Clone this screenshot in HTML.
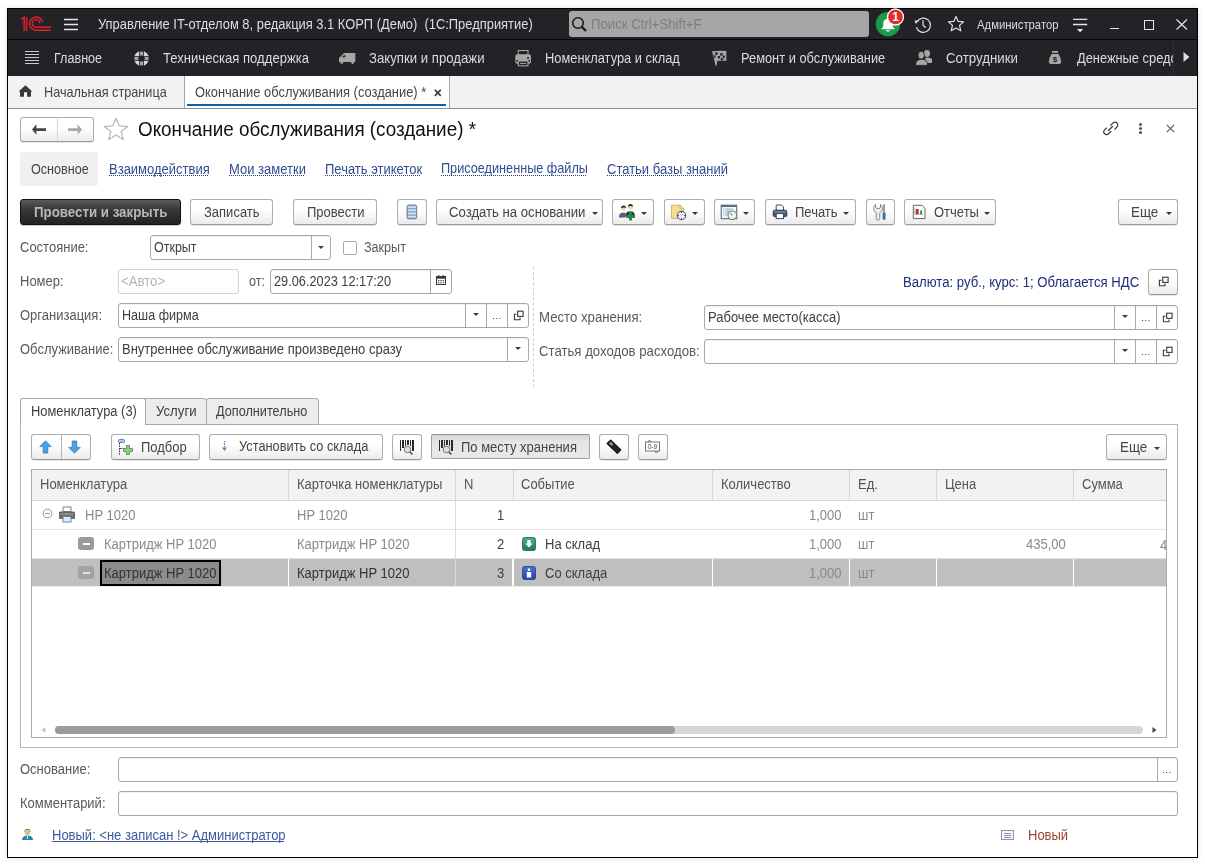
<!DOCTYPE html>
<html><head><meta charset="utf-8">
<style>
*{box-sizing:border-box}
html,body{margin:0;padding:0}
body{width:1205px;height:865px;background:#fff;position:relative;overflow:hidden;font-family:"Liberation Sans",sans-serif;font-size:13px;color:#333}
.a{position:absolute}
.t{position:absolute;white-space:nowrap;line-height:1;transform:scaleY(1.1);transform-origin:0 0.1em;will-change:transform}
#win{position:absolute;left:7px;top:8px;width:1191px;height:850px;border:1px solid #000;box-shadow:0 0 6px rgba(0,0,0,.12)}
#title{position:absolute;left:8px;top:9px;width:1189px;height:30px;background:#232327}
#tsep{position:absolute;left:8px;top:39px;width:1189px;height:1px;background:#050507}
#menu{position:absolute;left:8px;top:40px;width:1189px;height:36px;background:#222227}
#tabs{position:absolute;left:8px;top:76px;width:1189px;height:33px;background:#f2f2f2;border-bottom:1px solid #8e8e8e}
.mt{color:#dcdcdc;font-size:12.85px}
.btn{position:absolute;height:26px;border:1px solid #aeaeae;border-bottom-color:#9a9a9a;border-radius:3px;background:linear-gradient(#fff,#fff 40%,#ebebeb);box-shadow:0 1px 0 rgba(0,0,0,.10)}
.inp{position:absolute;height:25px;border:1px solid #a8a8a8;border-radius:3px;background:#fff;box-shadow:inset 0 1px 1px rgba(0,0,0,.06)}
.lbl{color:#5a5a5a;font-size:13px}
.lnk{font-size:13px;color:#324c93}
.dot{position:absolute;height:1px;background:repeating-linear-gradient(90deg,#2c3a78 0 1px,transparent 1px 2px)}
.dd{position:absolute;top:0;bottom:0;border-left:1px solid #a8a8a8}
.tri{position:absolute;width:0;height:0;border-left:3px solid transparent;border-right:3px solid transparent;border-top:3.5px solid #3a3a3a}
</style></head><body>
<div id="win"></div>
<div id="title"></div>
<div id="tsep"></div>
<div id="menu"></div>
<div id="tabs"></div>

<!-- TITLE BAR -->
<svg class="a" style="left:20px;top:16px" width="32" height="16" viewBox="0 0 32 16">
 <g fill="none" stroke="#e3202a" stroke-width="1.5">
  <path d="M1.2 3.6 L4.2 1.2 V15"/>
  <path d="M6.6 1.2 V15"/>
  <path d="M22.6 6.2 A6.6 6.6 0 1 0 16.2 14.3 H30.8"/>
  <path d="M19.9 7.2 A3.8 3.8 0 1 0 16.2 11.2 H30.8"/>
 </g>
</svg>
<svg class="a" style="left:63px;top:18px" width="16" height="13" viewBox="0 0 16 13">
 <g stroke="#e6e6e6" stroke-width="1.5"><path d="M1 1.5H15M1 6.5H15M1 11.5H15"/></g>
</svg>
<div class="t mt" style="left:98px;top:18px;color:#dedede;font-size:12.92px">Управление IT-отделом 8, редакция 3.1 КОРП (Демо)&nbsp; (1С:Предприятие)</div>
<div class="a" style="left:569px;top:11px;width:300px;height:26px;background:#a6a6a6;border-radius:3px"></div>
<svg class="a" style="left:571px;top:16px" width="17" height="17" viewBox="0 0 17 17">
 <circle cx="7" cy="7" r="5.3" fill="none" stroke="#1e1e1e" stroke-width="1.6"/>
 <path d="M10.8 10.8 L15 15" stroke="#1e1e1e" stroke-width="2.4"/>
</svg>
<div class="t" style="left:591px;top:17px;color:#7e7e7e;font-size:13.2px">Поиск Ctrl+Shift+F</div>
<svg class="a" style="left:874px;top:8px" width="32" height="30" viewBox="0 0 32 30">
 <circle cx="14" cy="16" r="12.3" fill="#1c9a45"/>
 <path d="M7.3 21.2 H20.8 L18.8 18.2 V14.8 A4.8 4.8 0 0 0 9.3 14.8 V18.2 Z" fill="#fff"/>
 <path d="M11.5 22.3 H16.5 Q14 25 11.5 22.3 Z" fill="#fff"/>
 <circle cx="21.5" cy="9" r="8" fill="#e42a2a" stroke="#fff" stroke-width="1.3"/>
 <text x="21.5" y="13.3" text-anchor="middle" font-family="Liberation Sans" font-weight="bold" font-size="12" fill="#fff">1</text>
</svg>
<svg class="a" style="left:913px;top:15px" width="19" height="19" viewBox="0 0 19 19">
 <path d="M4.2 6.6 A7.1 7.1 0 1 1 3.5 12.2" fill="none" stroke="#dcdcdc" stroke-width="1.25"/>
 <path d="M1.4 5.4 L6 5.4 L2.8 9 Z" fill="#dcdcdc"/>
 <path d="M10 5.2 V10 L12.7 12.7" fill="none" stroke="#dcdcdc" stroke-width="1.25"/>
</svg>
<svg class="a" style="left:947px;top:15px" width="18" height="18" viewBox="0 0 18 18">
 <path d="M9 1.5 L11.2 6.4 L16.6 6.9 L12.5 10.4 L13.8 15.8 L9 13 L4.2 15.8 L5.5 10.4 L1.4 6.9 L6.8 6.4 Z" fill="none" stroke="#e0e0e0" stroke-width="1.2" stroke-linejoin="round"/>
</svg>
<div class="t" style="left:977px;top:18.6px;color:#dcdcdc;font-size:11.3px">Администратор</div>
<svg class="a" style="left:1071px;top:17px" width="17" height="16" viewBox="0 0 17 16">
 <g stroke="#e6e6e6" stroke-width="1.3"><path d="M2 2.4H16.2M2 7.5H16.2"/></g>
 <path d="M5.9 12 H12.3 L9.1 15.2 Z" fill="#e6e6e6"/>
</svg>
<div class="a" style="left:1110px;top:28px;width:9px;height:1.3px;background:#e6e6e6"></div>
<div class="a" style="left:1144px;top:20px;width:10px;height:10px;border:1.2px solid #e6e6e6"></div>
<svg class="a" style="left:1176px;top:19px" width="12" height="11" viewBox="0 0 12 11">
 <path d="M0.5 0.5 L11 10.5 M11 0.5 L0.5 10.5" stroke="#e6e6e6" stroke-width="1.2"/>
</svg>

<!-- MENU BAR -->
<svg class="a" style="left:25px;top:51px" width="15" height="14" viewBox="0 0 15 14">
 <g stroke="#c8c8c8" stroke-width="1"><path d="M0 0.5H14M0 3.5H14M0 6.5H14M0 9.5H14M0 12.5H14"/></g>
</svg>
<div class="t mt" style="left:54px;top:52px;font-size:12.6px">Главное</div>
<svg class="a" style="left:134px;top:51px" width="16" height="16" viewBox="0 0 16 16">
 <circle cx="7.5" cy="7.5" r="7.5" fill="#d6d6d6"/>
 <rect x="5.2" y="0" width="4.6" height="16" fill="#222225"/>
 <rect x="0" y="5.2" width="16" height="4.6" fill="#222225"/>
 <rect x="6" y="0.6" width="3" height="4" fill="#a2a2a2"/>
 <rect x="6" y="10.4" width="3" height="4" fill="#a2a2a2"/>
 <rect x="0.4" y="6" width="4" height="3" fill="#a2a2a2"/>
 <rect x="10.6" y="6" width="4" height="3" fill="#a2a2a2"/>
</svg>
<div class="t mt" style="left:163px;top:51px;font-size:13.1px">Техническая поддержка</div>
<svg class="a" style="left:339px;top:52px" width="17" height="13" viewBox="0 0 17 13">
 <path d="M0 6 L5 1 H16.3 V10 H0 Z" fill="#a6a6a6"/>
 <path d="M2.8 5.2 L4.8 3.2 H6.3 V5.2 Z" fill="#222225"/>
 <circle cx="2.8" cy="10.6" r="1.4" fill="#a6a6a6"/><circle cx="13.6" cy="10.6" r="1.4" fill="#a6a6a6"/>
</svg>
<div class="t mt" style="left:369px;top:51px;font-size:13.2px">Закупки и продажи</div>
<svg class="a" style="left:515px;top:50px" width="17" height="17" viewBox="0 0 17 17">
 <rect x="3.3" y="0.5" width="9.7" height="5" fill="#222225" stroke="#a6a6a6" stroke-width="1.1"/>
 <rect x="0.3" y="4.3" width="15.7" height="9.5" rx="2" fill="#a6a6a6"/>
 <circle cx="13" cy="8" r="1" fill="#222225"/>
 <rect x="1.4" y="10" width="1.6" height="2" fill="#222225"/><rect x="13.3" y="10" width="1.6" height="2" fill="#222225"/>
 <rect x="3.3" y="11" width="9.7" height="4.8" fill="#222225" stroke="#a6a6a6" stroke-width="1.1"/>
 <path d="M5 13.4 H11.3" stroke="#a6a6a6" stroke-width="1"/>
</svg>
<div class="t mt" style="left:545px;top:52px">Номенклатура и склад</div>
<svg class="a" style="left:711px;top:50px" width="17" height="17" viewBox="0 0 17 17">
 <path d="M1 1.2 Q8 0.6 15.4 1 V10.7 H6.4 L5.6 16 L4.6 15.6 Z" fill="#a6a6a6"/>
 <g fill="#222225"><rect x="4.2" y="2.4" width="2.4" height="2.4"/><rect x="9.2" y="3.2" width="2.4" height="2.4"/><rect x="2.6" y="5.2" width="1.8" height="2.6"/><rect x="6.8" y="6" width="2.4" height="2.4"/><rect x="11.8" y="5.6" width="2" height="2.4"/><rect x="9.8" y="8.2" width="2.4" height="2.2"/><rect x="5.6" y="2.2" width="0" height="0"/></g>
</svg>
<div class="t mt" style="left:741px;top:52px">Ремонт и обслуживание</div>
<svg class="a" style="left:914px;top:50px" width="19" height="16" viewBox="0 0 19 16">
 <ellipse cx="13" cy="3.5" rx="3" ry="3.4" fill="#a6a6a6"/>
 <path d="M11 8 Q15 6.6 18 9 V13 H12 Z" fill="#a6a6a6"/>
 <ellipse cx="7.2" cy="5.2" rx="3.2" ry="3.9" fill="#a6a6a6" stroke="#222225" stroke-width=".9"/>
 <path d="M1.6 15.4 Q1.6 9.2 7.6 9.2 Q13.6 9.2 13.6 15.4 Z" fill="#a6a6a6" stroke="#222225" stroke-width=".9"/>
</svg>
<div class="t mt" style="left:946px;top:51.3px;font-size:13.3px">Сотрудники</div>
<svg class="a" style="left:1048px;top:50px" width="14" height="16" viewBox="0 0 14 16">
 <rect x="4" y="1" width="6.1" height="1.9" fill="#a6a6a6"/>
 <path d="M3.5 4 H10.5 Q13.2 8 13.2 12 Q13.2 14 11 14 H3 Q0.8 14 0.8 12 Q0.8 8 3.5 4 Z" fill="#a6a6a6"/>
 <text x="7" y="12.3" text-anchor="middle" font-family="Liberation Sans" font-size="8" font-weight="bold" fill="#222225">$</text>
</svg>
<div class="a" style="left:1077px;top:40px;width:96px;height:36px;overflow:hidden"><div class="t mt" style="left:0;top:12px">Денежные средства</div></div>
<div class="a" style="left:1173px;top:40px;width:1px;height:36px;background:#2e2e32"></div>
<svg class="a" style="left:1182px;top:51px" width="9" height="12" viewBox="0 0 9 12"><path d="M1.5 1 L7.5 6 L1.5 11Z" fill="#e0e0e0"/></svg>

<!-- TAB BAR -->
<svg class="a" style="left:18px;top:85px" width="15" height="13" viewBox="0 0 15 13">
 <path d="M7.5 0.3 L14.2 6.6 H13 V11.8 H9.1 V7.2 H6 V11.8 H2 V6.6 H0.5 Z" fill="#3a3a3a"/>
</svg>
<div class="t" style="left:44px;top:86px;color:#454545;font-size:12.7px">Начальная страница</div>
<div class="a" style="left:184px;top:76px;width:266px;height:32px;background:#fff;border-left:1px solid #a6a6a6;border-right:1px solid #a6a6a6"></div>
<div class="a" style="left:187px;top:104px;width:259px;height:2px;background:#0c60a6"></div>
<div class="t" style="left:195px;top:86px;color:#454545;font-size:12.9px">Окончание обслуживания (создание) *</div>
<svg class="a" style="left:433px;top:88px" width="10" height="10" viewBox="0 0 10 10"><path d="M1.8 1.8 L7.8 7.8 M7.8 1.8 L1.8 7.8" stroke="#404040" stroke-width="1.8"/></svg>


<!-- FORM HEADER -->
<div class="btn" style="left:20px;top:117px;width:74px;height:25px;border-radius:3px"></div>
<div class="a" style="left:57px;top:118px;width:1px;height:23px;background:#d6d6d6"></div>
<svg class="a" style="left:31px;top:123px" width="16" height="13" viewBox="0 0 16 13"><path d="M1 6.5 L5.4 1.2 V5.2 H15 V7.9 H5.4 V11.8 Z" fill="#454545"/></svg>
<svg class="a" style="left:67px;top:123px" width="16" height="13" viewBox="0 0 16 13"><path d="M15 6.5 L10.6 1.2 V5.2 H1 V7.9 H10.6 V11.8 Z" fill="#a9a9a9"/></svg>
<svg class="a" style="left:103px;top:117px" width="26" height="24" viewBox="0 0 26 24">
 <path d="M13 1.3 L16.1 8.8 L24.6 9.5 L18.1 14.6 L20.3 22.6 L13 18 L5.7 22.6 L7.9 14.6 L1.4 9.5 L9.9 8.8 Z" fill="none" stroke="#b0b0b0" stroke-width="1.1" stroke-linejoin="round"/>
</svg>
<div class="t" style="left:138px;top:119.5px;font-size:18.85px;color:#111">Окончание обслуживания (создание) *</div>
<svg class="a" style="left:1102px;top:120px" width="17" height="17" viewBox="0 0 17 17">
 <g fill="none" stroke="#3a3a3a" stroke-width="1.15" stroke-linecap="round">
  <path d="M4.4 8 L2.62 9.82 A2.8 2.8 0 0 0 6.58 13.78 L8.9 11.5"/>
  <path d="M8.6 5.3 L11.02 3.02 A2.8 2.8 0 0 1 14.98 6.98 L12.7 9.3"/>
  <path d="M6.5 10.5 L10.5 6.5"/>
 </g>
</svg>
<div class="a" style="left:1139px;top:123px;width:3px;height:3px;border-radius:50%;background:#555;box-shadow:0 4px 0 #555,0 8px 0 #555"></div>
<svg class="a" style="left:1166px;top:124px" width="9" height="9" viewBox="0 0 9 9"><path d="M0.8 0.8 L8.2 8.2 M8.2 0.8 L0.8 8.2" stroke="#555" stroke-width="1.1"/></svg>

<div class="a" style="left:20px;top:152px;width:78px;height:34px;background:#f0f0f0;border-radius:3px"></div>
<div class="t" style="left:30.5px;top:163px;color:#454545;font-size:12.6px">Основное</div>
<div class="t lnk" style="left:109px;top:161.7px">Взаимодействия</div>
<div class="t lnk" style="left:229px;top:161.7px">Мои заметки</div>
<div class="t lnk" style="left:325px;top:161.7px">Печать этикеток</div>
<div class="t lnk" style="left:441px;top:161.7px;font-size:12.7px">Присоединенные файлы</div>
<div class="t lnk" style="left:607px;top:161.7px">Статьи базы знаний</div>

<div class="dot" style="left:109px;top:175px;width:100px"></div>
<div class="dot" style="left:229px;top:175px;width:76px"></div>
<div class="dot" style="left:325px;top:175px;width:96px"></div>
<div class="dot" style="left:441px;top:175px;width:146px"></div>
<div class="dot" style="left:607px;top:175px;width:118px"></div>
<!-- TOOLBAR -->
<div class="a" style="left:20px;top:199px;width:161px;height:26px;border-radius:3px;border:1px solid #111;background:linear-gradient(#5a5a5e,#353538 45%,#232325);box-shadow:0 1px 1px rgba(0,0,0,.2)"></div>
<div class="t" style="left:34px;top:205px;font-weight:bold;color:#b8b8b8;font-size:13.3px">Провести и закрыть</div>
<div class="btn" style="left:190px;top:199px;width:83px"></div>
<div class="t" style="left:204px;top:205px;color:#454545">Записать</div>
<div class="btn" style="left:293px;top:199px;width:84px"></div>
<div class="t" style="left:307px;top:205px;color:#454545">Провести</div>
<div class="btn" style="left:397px;top:199px;width:30px"></div>
<svg class="a" style="left:406px;top:204px" width="12" height="16" viewBox="0 0 12 16">
 <rect x="1" y="1" width="9.7" height="13.9" rx="1.6" fill="#8aa3bf" stroke="#64798f" stroke-width=".9"/>
 <g fill="#d2e6f8"><rect x="1.8" y="2.2" width="8.1" height="1.7"/><rect x="1.8" y="5.4" width="8.1" height="1.7"/><rect x="1.8" y="8.6" width="8.1" height="1.7"/><rect x="1.8" y="11.8" width="8.1" height="1.7"/></g>
</svg>
<div class="btn" style="left:436px;top:199px;width:167px"></div>
<div class="t" style="left:449px;top:205px;color:#454545;font-size:13.15px">Создать на основании</div>
<div class="tri" style="left:592px;top:212px"></div>
<div class="btn" style="left:612px;top:199px;width:42px"></div>
<svg class="a" style="left:618px;top:203px" width="19" height="18" viewBox="0 0 19 18">
 <path d="M1 14.5 Q1 9.7 4.5 9.7 H7.5 V14.5 Z" fill="#555b70"/>
 <circle cx="5.5" cy="5.3" r="2.4" fill="#eadba4"/>
 <path d="M3 5 Q3 2.5 5.5 2.5 Q8 2.5 8 5 Q6.5 3.8 3 5Z" fill="#3a2a18"/>
 <path d="M7.3 13.5 Q7.3 8.2 12.3 8.2 Q17 8.2 17 13.5 Z" fill="#2b3552"/>
 <circle cx="12.5" cy="3.9" r="2.5" fill="#d8e0b0"/>
 <path d="M10 3.6 Q10 1 12.5 1 Q15 1 15 3.6 Q13.5 2.4 10 3.6Z" fill="#3a2a18"/>
 <path d="M11 9 H14 V12 H17 V15 H14 V17.5 H11 V15 H8.3 V12 H11 Z" fill="#1e8c3c"/>
</svg>
<div class="tri" style="left:641px;top:212px"></div>
<div class="btn" style="left:664px;top:199px;width:41px"></div>
<svg class="a" style="left:670px;top:204px" width="18" height="18" viewBox="0 0 18 18">
 <path d="M1.4 1.2 H10 L13.7 4.8 V14.5 H1.4 Z" fill="#f3de95" stroke="#d4b25a" stroke-width=".9"/>
 <path d="M10 1.2 V4.8 H13.7 Z" fill="#f8e8b0" stroke="#c9a548" stroke-width=".7"/>
 <circle cx="11.5" cy="11.5" r="4.2" fill="#eef2fb" stroke="#50586a" stroke-width="1.1"/>
 <g stroke="#2a2f3a" stroke-width="1"><path d="M11.5 7.6V8.8M11.5 14.2V15.4M7.6 11.5H8.8M14.2 11.5H15.4"/></g>
 <path d="M11.5 11.5 L12.8 9.8" stroke="#6a7aa0" stroke-width=".8"/>
</svg>
<div class="tri" style="left:692px;top:212px"></div>
<div class="btn" style="left:714px;top:199px;width:41px"></div>
<svg class="a" style="left:720px;top:204px" width="18" height="18" viewBox="0 0 18 18">
 <rect x="1.2" y="1.2" width="15.5" height="13.5" fill="#f6fafd" stroke="#5b6b7b" stroke-width="1.1"/>
 <rect x="1.2" y="1.2" width="15.5" height="1.8" fill="#5b6b7b"/>
 <g fill="#6d8fc4"><rect x="3.3" y="4.6" width="1" height="1"/><rect x="3.3" y="6.6" width="1" height="1"/><rect x="3.3" y="8.6" width="1" height="1"/><rect x="3.3" y="10.6" width="1" height="1"/>
 <rect x="5.3" y="4.7" width="7.5" height=".8"/><rect x="5.3" y="6.7" width="4.5" height=".8"/><rect x="5.3" y="8.7" width="3" height=".8"/><rect x="5.3" y="10.7" width="2" height=".8"/></g>
 <circle cx="12.3" cy="11.3" r="4.3" fill="#eef7ee" stroke="#6a8a6a" stroke-width="1.1"/>
 <path d="M10.6 9.4 L12.3 11.3" stroke="#2a3a2a" stroke-width="1"/>
</svg>
<div class="tri" style="left:743px;top:212px"></div>
<div class="btn" style="left:765px;top:199px;width:91px"></div>
<svg class="a" style="left:772px;top:204px" width="16" height="16" viewBox="0 0 16 16">
 <path d="M4.2 1 H9.5 L11.5 3 V6.5 H4.2 Z" fill="#fff" stroke="#3a4a5a" stroke-width="1"/>
 <rect x="1.2" y="6.2" width="13.6" height="6.4" rx="1.5" fill="#3e5a7a" stroke="#2a3e55" stroke-width="1"/>
 <rect x="2.4" y="7.2" width="11.2" height="1.3" fill="#7d95b0"/>
 <rect x="4.2" y="9.6" width="7.3" height="5" fill="#fff" stroke="#3a4a5a" stroke-width="1"/>
</svg>
<div class="t" style="left:795px;top:205px;color:#454545">Печать</div>
<div class="tri" style="left:843px;top:212px"></div>
<div class="btn" style="left:866px;top:199px;width:29px"></div>
<svg class="a" style="left:872px;top:203px" width="17" height="18" viewBox="0 0 17 18">
 <path d="M3.6 1.5 A4.9 4.9 0 0 0 4.3 9.8 V15.4 A1.75 1.75 0 0 0 7.8 15.4 V9.8 A4.9 4.9 0 0 0 8.5 1.5 V4 Q8.5 5.6 6.05 5.6 Q3.6 5.6 3.6 4 Z" fill="#eeeeee" stroke="#7a7a7a" stroke-width=".9"/>
 <rect x="11.4" y="1.2" width="1.3" height="8.6" fill="#6a6a6a"/>
 <rect x="10.6" y="9.4" width="2.9" height="7.4" rx=".9" fill="#3d6e9e"/>
</svg>
<div class="btn" style="left:904px;top:199px;width:92px"></div>
<svg class="a" style="left:912px;top:204px" width="14" height="16" viewBox="0 0 14 16">
 <path d="M1.3 1.3 H10 L13 4.3 V14.6 H1.3 Z" fill="#fff" stroke="#666" stroke-width="1"/>
 <path d="M2.8 3.5 V10.3 H11" fill="none" stroke="#aaa" stroke-width=".8"/>
 <rect x="3.7" y="5" width="3" height="5.3" fill="#c8303a"/>
 <rect x="8.2" y="6.4" width="1.8" height="3.9" fill="#2a8a3a"/>
</svg>
<div class="t" style="left:934px;top:205px;color:#454545">Отчеты</div>
<div class="tri" style="left:983.5px;top:212px"></div>
<div class="btn" style="left:1118px;top:199px;width:60px"></div>
<div class="t" style="left:1131px;top:204.6px;color:#454545;font-size:13.4px">Еще</div>
<div class="tri" style="left:1165.5px;top:212px"></div>

<!-- FIELDS -->
<div class="t lbl" style="left:20px;top:240px">Состояние:</div>
<div class="inp" style="left:150px;top:235px;width:181px"><div class="dd" style="left:160px"></div></div>
<div class="t" style="left:154px;top:240.9px;color:#414141;font-size:12.5px">Открыт</div>
<div class="tri" style="left:318px;top:246px"></div>
<div class="a" style="left:343px;top:241px;width:14px;height:14px;border:1px solid #a8a8a8;border-radius:2px;background:#fff"></div>
<div class="t lbl" style="left:364px;top:240.5px;font-size:12.6px">Закрыт</div>

<div class="t lbl" style="left:20px;top:274px">Номер:</div>
<div class="inp" style="left:118px;top:269px;width:121px;border-color:#d3d3d3;box-shadow:none"></div>
<div class="t" style="left:121px;top:273.5px;color:#b5b5b5;font-size:13.2px">&lt;Авто&gt;</div>
<div class="t lbl" style="left:249px;top:274.5px;font-size:12.6px">от:</div>
<div class="inp" style="left:270px;top:269px;width:182px"><div class="dd" style="left:159px"></div></div>
<div class="t" style="left:274px;top:274.5px;color:#414141;font-size:12.75px">29.06.2023 12:17:20</div>
<svg class="a" style="left:436px;top:275px" width="10" height="10" viewBox="0 0 10 10">
 <rect x="0.5" y="1.5" width="9" height="8" fill="#fff" stroke="#3a3a3a"/>
 <rect x="0.5" y="1.5" width="9" height="2.2" fill="#3a3a3a"/>
 <g fill="#3a3a3a"><rect x="2" y="5" width="1.3" height="1.1"/><rect x="4.35" y="5" width="1.3" height="1.1"/><rect x="6.7" y="5" width="1.3" height="1.1"/><rect x="2" y="7.2" width="1.3" height="1.1"/><rect x="4.35" y="7.2" width="1.3" height="1.1"/><rect x="6.7" y="7.2" width="1.3" height="1.1"/></g>
 <rect x="2.2" y="0" width="1.1" height="1.8" fill="#3a3a3a"/><rect x="6.7" y="0" width="1.1" height="1.8" fill="#3a3a3a"/>
</svg>
<div class="t" style="left:903px;top:274.5px;color:#1f2d7a;font-size:13.15px">Валюта: руб., курс: 1; Облагается НДС</div>
<div class="btn" style="left:1148px;top:269px;width:30px"></div>

<div class="t lbl" style="left:20px;top:308px">Организация:</div>
<div class="inp" style="left:118px;top:303px;width:411px"><div class="dd" style="left:346px"></div><div class="dd" style="left:367px"></div><div class="dd" style="left:388px"></div></div>
<div class="t" style="left:122px;top:309px;color:#414141;font-size:12.6px">Наша фирма</div>
<div class="tri" style="left:473px;top:313px"></div>

<div class="t lbl" style="left:20px;top:342px">Обслуживание:</div>
<div class="inp" style="left:118px;top:337px;width:411px"><div class="dd" style="left:388px"></div></div>
<div class="t" style="left:122px;top:342px;color:#414141">Внутреннее обслуживание произведено сразу</div>
<div class="tri" style="left:515px;top:347px"></div>

<div class="a" style="left:533px;top:267px;width:0;height:120px;border-left:1px dashed #cfcfcf"></div>

<div class="t lbl" style="left:539px;top:310px;font-size:13.2px">Место хранения:</div>
<div class="inp" style="left:704px;top:305px;width:474px"><div class="dd" style="left:409px"></div><div class="dd" style="left:430px"></div><div class="dd" style="left:451px"></div></div>
<div class="t" style="left:708px;top:310px;color:#414141">Рабочее место(касса)</div>
<div class="tri" style="left:1122px;top:315px"></div>

<div class="t lbl" style="left:539px;top:343.5px;font-size:13.2px">Статья доходов расходов:</div>
<div class="inp" style="left:704px;top:339px;width:474px"><div class="dd" style="left:409px"></div><div class="dd" style="left:430px"></div><div class="dd" style="left:451px"></div></div>
<div class="tri" style="left:1122px;top:349px"></div>


<div class="a" style="left:493.2px;top:318px;width:1.3px;height:1.3px;background:#444;box-shadow:3.2px 0 0 #444,6.4px 0 0 #444"></div>
<svg class="a" style="left:512px;top:308.5px" width="13" height="13" viewBox="0 0 13 13"><rect x="5.7" y="2.2" width="5.4" height="5.2" fill="none" stroke="#3a3a3a" stroke-width="1.1"/><path d="M4.6 5.2 H2.4 V10.8 H8 V8.6" fill="none" stroke="#3a3a3a" stroke-width="1.1"/></svg>
<div class="a" style="left:1142.2px;top:320px;width:1.3px;height:1.3px;background:#444;box-shadow:3.2px 0 0 #444,6.4px 0 0 #444"></div>
<svg class="a" style="left:1161px;top:310.5px" width="13" height="13" viewBox="0 0 13 13"><rect x="5.7" y="2.2" width="5.4" height="5.2" fill="none" stroke="#3a3a3a" stroke-width="1.1"/><path d="M4.6 5.2 H2.4 V10.8 H8 V8.6" fill="none" stroke="#3a3a3a" stroke-width="1.1"/></svg>
<div class="a" style="left:1142.2px;top:354px;width:1.3px;height:1.3px;background:#444;box-shadow:3.2px 0 0 #444,6.4px 0 0 #444"></div>
<svg class="a" style="left:1161px;top:344.5px" width="13" height="13" viewBox="0 0 13 13"><rect x="5.7" y="2.2" width="5.4" height="5.2" fill="none" stroke="#3a3a3a" stroke-width="1.1"/><path d="M4.6 5.2 H2.4 V10.8 H8 V8.6" fill="none" stroke="#3a3a3a" stroke-width="1.1"/></svg>
<svg class="a" style="left:1157px;top:274.5px" width="13" height="13" viewBox="0 0 13 13"><rect x="5.7" y="2.2" width="5.4" height="5.2" fill="none" stroke="#3a3a3a" stroke-width="1.1"/><path d="M4.6 5.2 H2.4 V10.8 H8 V8.6" fill="none" stroke="#3a3a3a" stroke-width="1.1"/></svg>
<!-- TABS PANEL -->
<div class="a" style="left:20px;top:424px;width:1158px;height:324px;border:1px solid #b6b6b6"></div>
<div class="a" style="left:145px;top:398px;width:62px;height:27px;background:#ececec;border:1px solid #a8a8a8;border-left:none;border-radius:0 3px 0 0"></div>
<div class="a" style="left:206px;top:398px;width:113px;height:27px;background:#ececec;border:1px solid #a8a8a8;border-radius:3px 3px 0 0"></div>
<div class="a" style="left:20px;top:398px;width:126px;height:27px;background:#fff;border:1px solid #a8a8a8;border-bottom:none;border-radius:3px 3px 0 0"></div>
<div class="t" style="left:30.5px;top:404.5px;color:#414141;font-size:12.9px">Номенклатура (3)</div>
<div class="t" style="left:156px;top:404.3px;color:#414141;font-size:13.2px">Услуги</div>
<div class="t" style="left:216px;top:404.5px;color:#414141;font-size:12.7px">Дополнительно</div>

<!-- TABLE TOOLBAR -->
<div class="btn" style="left:31px;top:434px;width:60px;border-radius:3px"></div>
<div class="a" style="left:61px;top:435px;width:1px;height:24px;background:#b5b5b5"></div>
<svg class="a" style="left:39px;top:440px" width="13" height="14" viewBox="0 0 13 14"><path d="M6.5 0.8 L12.2 6.6 H8.8 V13 H4.2 V6.6 H0.8 Z" fill="#4aa3e0" stroke="#2d7fbf" stroke-width=".8"/></svg>
<svg class="a" style="left:68px;top:440px" width="13" height="14" viewBox="0 0 13 14"><path d="M6.5 13.2 L12.2 7.4 H8.8 V1 H4.2 V7.4 H0.8 Z" fill="#4aa3e0" stroke="#2d7fbf" stroke-width=".8"/></svg>
<div class="btn" style="left:111px;top:434px;width:89px"></div>
<svg class="a" style="left:117px;top:438px" width="19" height="18" viewBox="0 0 19 18">
 <rect x="1.5" y="1.5" width="6" height="3" rx="1" fill="#b9c9ef" stroke="#5a6fb8" stroke-width=".9"/>
 <path d="M2.5 5 V17 M3 10.5 H7" stroke="#333" stroke-width="1" stroke-dasharray="1.5 1"/>
 <path d="M9.5 7.5 H12.5 V10.5 H15.5 V13.5 H12.5 V16.5 H9.5 V13.5 H6.5 V10.5 H9.5 Z" fill="#8fd07c" stroke="#4e9a3c" stroke-width=".9"/>
</svg>
<div class="t" style="left:141px;top:440px;color:#454545">Подбор</div>
<div class="btn" style="left:209px;top:434px;width:174px"></div>
<svg class="a" style="left:221px;top:440px" width="7" height="13" viewBox="0 0 7 13"><path d="M3.5 1 V7" stroke="#4a86c8" stroke-width="1.2" stroke-dasharray="1.5 1"/><path d="M1 7.5 H6 L3.5 11 Z" fill="#4a86c8"/></svg>
<div class="t" style="left:239px;top:440px;color:#454545;font-size:12.8px">Установить со склада</div>
<div class="btn" style="left:392px;top:434px;width:30px"></div>
<svg id="bc1" class="a" style="left:399px;top:439px" width="17" height="18" viewBox="0 0 17 18">
 <g fill="#2a2a2a"><rect x="1" y="1" width="1" height="11"/><rect x="3" y="1" width="2" height="8"/><rect x="6" y="1" width="1" height="6"/><rect x="8" y="1" width="2" height="5"/><rect x="11" y="1" width="1" height="6"/><rect x="13" y="1" width="2" height="11"/></g>
 <circle cx="8.5" cy="10.5" r="3.3" fill="#d9dcef" stroke="#777" stroke-width="1"/>
 <path d="M10.8 12.8 L13.5 15.5" stroke="#666" stroke-width="1.8"/>
</svg>
<div class="a" style="left:431px;top:434px;width:159px;height:25px;border:1px solid #a0a0a0;border-top-color:#8f8f8f;border-radius:2px;background:linear-gradient(#d6d6d6,#e6e6e6 30%,#e8e8e8)"></div>
<svg class="a" style="left:438px;top:439px" width="17" height="18" viewBox="0 0 17 18">
 <g fill="#2a2a2a"><rect x="1" y="1" width="1" height="11"/><rect x="3" y="1" width="2" height="8"/><rect x="6" y="1" width="1" height="6"/><rect x="8" y="1" width="2" height="5"/><rect x="11" y="1" width="1" height="6"/><rect x="13" y="1" width="2" height="11"/></g>
 <circle cx="8.5" cy="10.5" r="3.3" fill="#d9dcef" stroke="#777" stroke-width="1"/>
 <path d="M10.8 12.8 L13.5 15.5" stroke="#666" stroke-width="1.8"/>
</svg>
<div class="t" style="left:461px;top:440px;color:#454545">По месту хранения</div>
<div class="btn" style="left:599px;top:434px;width:30px"></div>
<svg class="a" style="left:606px;top:439px" width="16" height="16" viewBox="0 0 16 16">
 <path d="M1.2 4.6 L4.6 1.2 L14.6 10.8 L11.4 14.2 Z" fill="#2b2620" stroke="#1a1712" stroke-width="1.4" stroke-linejoin="round"/>
 <path d="M3 4.3 L4.6 2.7 L7.4 5.3 L5.8 6.9 Z" fill="#a49c88"/>
</svg>
<div class="btn" style="left:638px;top:434px;width:30px"></div>
<svg class="a" style="left:644px;top:438px" width="18" height="17" viewBox="0 0 18 17">
 <rect x="1.5" y="4" width="14" height="9" fill="#fff" stroke="#666" stroke-width=".9"/>
 <path d="M4 4 L5.5 2 L7 4" fill="none" stroke="#666" stroke-width=".9"/>
 <path d="M11 13 L12.5 15 L14 13" fill="none" stroke="#666" stroke-width=".9"/>
 <text x="8.5" y="11.2" text-anchor="middle" font-family="Liberation Sans" font-size="6.5" fill="#444">0-9</text>
</svg>
<div class="btn" style="left:1106px;top:434px;width:61px"></div>
<div class="t" style="left:1120px;top:439.6px;color:#454545;font-size:13.4px">Еще</div>
<div class="tri" style="left:1154px;top:447px"></div>

<!-- TABLE -->
<div class="a" style="left:31px;top:469px;width:1136px;height:269px;border:1px solid #a9a9a9;background:#fff"></div>
<div class="a" style="left:32px;top:470px;width:1134px;height:31px;background:#f2f2f2;border-bottom:1px solid #d3d3d3"></div>
<div class="a" style="left:288px;top:470px;width:1px;height:30px;background:#d6d6d6"></div>
<div class="a" style="left:455px;top:470px;width:1px;height:30px;background:#d6d6d6"></div>
<div class="a" style="left:513px;top:470px;width:1px;height:30px;background:#d6d6d6"></div>
<div class="a" style="left:712px;top:470px;width:1px;height:30px;background:#d6d6d6"></div>
<div class="a" style="left:849px;top:470px;width:1px;height:30px;background:#d6d6d6"></div>
<div class="a" style="left:936px;top:470px;width:1px;height:30px;background:#d6d6d6"></div>
<div class="a" style="left:1073px;top:470px;width:1px;height:30px;background:#d6d6d6"></div>
<div class="t" style="left:40px;top:476.5px;color:#555">Номенклатура</div>
<div class="t" style="left:297px;top:476.5px;color:#555">Карточка номенклатуры</div>
<div class="t" style="left:464px;top:476.5px;color:#555">N</div>
<div class="t" style="left:521px;top:476.5px;color:#555">Событие</div>
<div class="t" style="left:721px;top:476.5px;color:#555">Количество</div>
<div class="t" style="left:858px;top:476.5px;color:#555">Ед.</div>
<div class="t" style="left:945px;top:476.5px;color:#555">Цена</div>
<div class="t" style="left:1082px;top:476.5px;color:#555">Сумма</div>

<div class="a" style="left:32px;top:529px;width:1134px;height:1px;background:#e4e4e4"></div>
<div class="a" style="left:32px;top:558px;width:1134px;height:1px;background:#e4e4e4"></div>
<div class="a" style="left:455px;top:500px;width:1px;height:59px;background:#dcdcdc"></div>
<div class="a" style="left:32px;top:559px;width:1134px;height:27px;background:#bfbfbf"></div>
<div class="a" style="left:32px;top:586px;width:1134px;height:1px;background:#e9e9e9"></div>
<div class="a" style="left:288px;top:559px;width:1px;height:27px;background:#fff"></div>
<div class="a" style="left:455px;top:559px;width:1px;height:27px;background:#d9d9d9"></div>
<div class="a" style="left:512px;top:559px;width:2px;height:27px;background:#fff"></div>
<div class="a" style="left:712px;top:559px;width:1px;height:27px;background:#fff"></div>
<div class="a" style="left:849px;top:559px;width:1px;height:27px;background:#fff"></div>
<div class="a" style="left:936px;top:559px;width:1px;height:27px;background:#fff"></div>
<div class="a" style="left:1073px;top:559px;width:1px;height:27px;background:#fff"></div>

<svg class="a" style="left:42px;top:508px" width="11" height="11" viewBox="0 0 11 11"><circle cx="5.5" cy="5.5" r="4.4" fill="none" stroke="#8a8a8a" stroke-width=".9"/><path d="M3 5.5 H8" stroke="#8a8a8a" stroke-width=".9"/></svg>
<svg class="a" style="left:58px;top:506px" width="18" height="17" viewBox="0 0 18 17">
 <rect x="5" y="1" width="8" height="4.5" fill="#fff" stroke="#777" stroke-width=".9"/>
 <path d="M1.5 6 H16.5 V12.5 H1.5 Z" fill="#6e6e6e" stroke="#555" stroke-width=".8"/>
 <rect x="2.5" y="7" width="13" height="2" fill="#888"/>
 <rect x="5" y="10.5" width="8" height="5.5" fill="#dfe9f3" stroke="#5a7da8" stroke-width=".9"/>
</svg>
<div class="t" style="left:85px;top:508px;color:#8a8a8a">HP 1020</div>
<div class="t" style="left:297px;top:508px;color:#8a8a8a">HP 1020</div>
<div class="t" style="left:497px;top:508px;color:#414141">1</div>
<div class="t" style="left:809px;top:508px;color:#8a8a8a">1,000</div>
<div class="t" style="left:858px;top:508px;color:#8a8a8a">шт</div>

<div class="a" style="left:78px;top:537px;width:16px;height:13px;border-radius:3px;background:#9a9a9a"></div>
<div class="a" style="left:82.5px;top:543px;width:7px;height:2px;background:#fff"></div>
<div class="t" style="left:104px;top:537px;color:#8a8a8a">Картридж HP 1020</div>
<div class="t" style="left:297px;top:537px;color:#8a8a8a">Картридж HP 1020</div>
<div class="t" style="left:497px;top:537px;color:#414141">2</div>
<svg class="a" style="left:522px;top:537px" width="14" height="14" viewBox="0 0 14 14">
 <defs><linearGradient id="gg" x1="0" y1="0" x2="0" y2="1"><stop offset="0" stop-color="#47b08a"/><stop offset="1" stop-color="#1f7a4c"/></linearGradient></defs>
 <rect x="0.5" y="0.5" width="13" height="13" rx="2" fill="url(#gg)" stroke="#1b6a44" stroke-width=".8"/>
 <path d="M5.3 3 H8.7 V6.5 H10.8 L7 10.5 L3.2 6.5 H5.3 Z" fill="#fff"/>
</svg>
<div class="t" style="left:545px;top:537px;color:#414141">На склад</div>
<div class="t" style="left:809px;top:537px;color:#8a8a8a">1,000</div>
<div class="t" style="left:858px;top:537px;color:#8a8a8a">шт</div>
<div class="t" style="left:1026px;top:537px;color:#8a8a8a">435,00</div>
<div class="a" style="left:1160px;top:530px;width:6px;height:28px;overflow:hidden"><div class="t" style="left:0;top:8px;color:#8a8a8a">4</div></div>

<div class="a" style="left:78px;top:566px;width:16px;height:13px;border-radius:3px;background:#a2a2a2"></div>
<div class="a" style="left:82.5px;top:572px;width:7px;height:2px;background:#e4e4e4"></div>
<div class="a" style="left:100px;top:560px;width:121px;height:26px;border:2px solid #000;background:#8c8c8c"></div>
<div class="t" style="left:104px;top:566px;color:#333">Картридж HP 1020</div>
<div class="t" style="left:297px;top:566px;color:#333">Картридж HP 1020</div>
<div class="t" style="left:497px;top:566px;color:#414141">3</div>
<svg class="a" style="left:522px;top:566px" width="14" height="14" viewBox="0 0 14 14">
 <defs><linearGradient id="gb" x1="0" y1="0" x2="0" y2="1"><stop offset="0" stop-color="#4a6fd0"/><stop offset="1" stop-color="#2a46a0"/></linearGradient></defs>
 <rect x="0.5" y="0.5" width="13" height="13" rx="2" fill="url(#gb)" stroke="#23398a" stroke-width=".8"/>
 <rect x="5.8" y="2.5" width="2.4" height="2.4" fill="#fff"/><rect x="4.8" y="6" width="4.4" height="5.5" fill="#fff"/>
</svg>
<div class="t" style="left:545px;top:566px;color:#414141">Со склада</div>
<div class="t" style="left:809px;top:566px;color:#8a8a8a">1,000</div>
<div class="t" style="left:858px;top:566px;color:#8a8a8a">шт</div>

<!-- SCROLLBAR -->
<svg class="a" style="left:40px;top:726px" width="7" height="8" viewBox="0 0 7 8"><path d="M5.5 1 L1.5 4 L5.5 7 Z" fill="#c4c4c4"/></svg>
<div class="a" style="left:55px;top:726px;width:1088px;height:8px;border-radius:4px;background:#d6d6d6"></div>
<div class="a" style="left:55px;top:726px;width:620px;height:8px;border-radius:4px;background:#9b9b9b"></div>
<svg class="a" style="left:1151px;top:726px" width="7" height="8" viewBox="0 0 7 8"><path d="M1.5 1 L5.5 4 L1.5 7 Z" fill="#444"/></svg>

<!-- BOTTOM FIELDS -->
<div class="t lbl" style="left:20px;top:762px">Основание:</div>
<div class="inp" style="left:118px;top:757px;width:1060px"><div class="dd" style="left:1038px"></div></div>
<div class="a" style="left:1163.2px;top:771.5px;width:1.3px;height:1.3px;background:#444;box-shadow:3.2px 0 0 #444,6.4px 0 0 #444"></div>
<div class="t lbl" style="left:20px;top:796px">Комментарий:</div>
<div class="inp" style="left:118px;top:791px;width:1060px"></div>
<svg class="a" style="left:21px;top:827px" width="13" height="14" viewBox="0 0 13 14">
 <path d="M3.5 5 A3 3 0 1 1 9.5 5" fill="#3d2c16"/>
 <circle cx="6.5" cy="5.3" r="2.8" fill="#d9c28f"/>
 <path d="M1 13 Q1 8.5 6.5 8.5 Q12 8.5 12 13 Z" fill="#2d84ad"/>
 <path d="M6.5 8.8 V12" stroke="#cfeaf5" stroke-width="1"/>
</svg>
<div class="a" style="left:52px;top:841px;width:232px;height:1px;background:#3d5a9b"></div>
<div class="t" style="left:52px;top:828px;color:#3d5a9b;font-size:13px">Новый: &lt;не записан !&gt; Администратор</div>
<svg class="a" style="left:1000px;top:829px" width="15" height="12" viewBox="0 0 15 12">
 <rect x="1.5" y="1.5" width="12" height="9" fill="#f6f8fb" stroke="#8494aa" stroke-width="1"/>
 <path d="M4 4.5 H11 M4 6.5 H11 M4 8.5 H11" stroke="#8494aa" stroke-width="1"/>
</svg>
<div class="t" style="left:1028px;top:828px;color:#a0432d">Новый</div>

</body></html>
